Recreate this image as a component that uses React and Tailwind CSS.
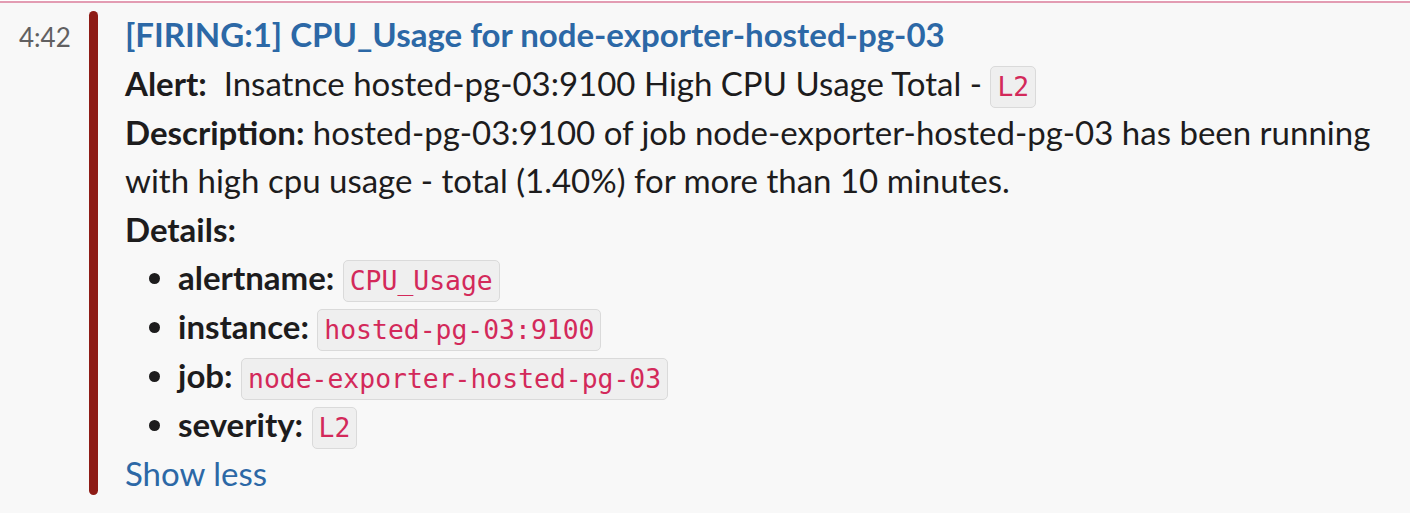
import React from "react";

const Code = ({ children }) => (
  <code className="inline-block rounded-[5px] border border-[#dadada] bg-[#efefef] px-[6px] py-[5px] align-baseline font-['DejaVu_Sans_Mono',monospace] text-[26.4px] leading-[30px] text-[#d3295a]">
    {children}
  </code>
);

const details = [
  { name: "alertname", value: "CPU_Usage" },
  { name: "instance", value: "hosted-pg-03:9100" },
  { name: "job", value: "node-exporter-hosted-pg-03" },
  { name: "severity", value: "L2" },
];

export default function App() {
  return (
    <div className="h-[522px] w-[1410px] bg-white font-['Lato',sans-serif] text-[#1d1c1d]">
      <div className="mt-px h-[2px] bg-[#e39cb3]" />
      <div className="flex h-[510px] bg-[#f8f8f8]">
        <div className="w-[89px] pl-[19px] pt-[16px] text-[26px] leading-[36px] text-[#616061]">
          4:42
        </div>
        <div className="mt-[8px] h-[484px] w-[9px] rounded-full bg-[#8e1c16]" />
        <div className="pl-[27px] pt-[7px] text-[33px] leading-[48.5px]">
          <div className="font-bold text-[#2c68a6]">
            [FIRING:1] CPU_Usage for node-exporter-hosted-pg-03
          </div>
          <div>
            <b>Alert:</b>&nbsp; Insatnce hosted-pg-03:9100 High CPU Usage Total - <Code>L2</Code>
          </div>
          <div>
            <b>Description:</b> hosted-pg-03:9100 of job node-exporter-hosted-pg-03 has been running
            <br />
            with high cpu usage - total (1.40%) for more than 10 minutes.
          </div>
          <div className="font-bold">Details:</div>
          <ul className="list-disc pl-[53px]">
            {details.map((d) => (
              <li key={d.name}>
                <b>{d.name}:</b> <Code>{d.value}</Code>
              </li>
            ))}
          </ul>
          <div className="text-[#2c68a6]">Show less</div>
        </div>
      </div>
    </div>
  );
}
